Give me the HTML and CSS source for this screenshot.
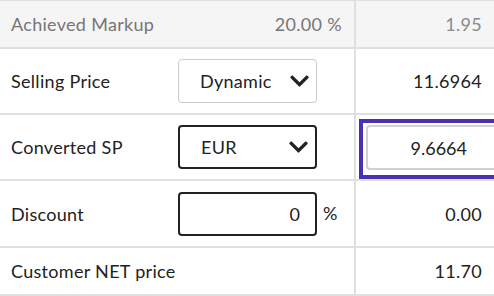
FILE: index.html
```html
<!DOCTYPE html>
<html lang="en">
<head>
    <meta charset="UTF-8">
    <meta name="viewport" content="width=device-width, initial-scale=1.0">
    <title>Price calculation</title>
    <link rel="stylesheet" href="styles.css">
</head>
<body>
    <div class="price-table">
        <div class="row row-muted">
            <div class="cell label">Achieved Markup</div>
            <div class="cell control value">20.00 %</div>
            <div class="cell result">1.95</div>
        </div>

        <div class="row row-tall">
            <div class="cell label">Selling Price</div>
            <div class="cell control">
                <div class="select">
                    <span>Dynamic</span>
                    <svg class="chevron" viewBox="0 120 448 270"><path d="M207 381L13 187c-9-9-9-25 0-34l23-23c9-9 25-9 34 0L224 285l155-155c9-9 25-9 34 0l23 23c9 9 9 25 0 34L241 381c-9 9-25 9-34 0z"/></svg>
                </div>
            </div>
            <div class="cell result">11.6964</div>
        </div>

        <div class="row row-tall">
            <div class="cell label">Converted SP</div>
            <div class="cell control">
                <div class="select select-dark">
                    <span>EUR</span>
                    <svg class="chevron" viewBox="0 120 448 270"><path d="M207 381L13 187c-9-9-9-25 0-34l23-23c9-9 25-9 34 0L224 285l155-155c9-9 25-9 34 0l23 23c9 9 9 25 0 34L241 381c-9 9-25 9-34 0z"/></svg>
                </div>
            </div>
            <div class="cell result result-edit">
                <div class="focus-box">
                    <input type="text" class="sp-input" value="9.6664">
                </div>
            </div>
        </div>

        <div class="row row-tall row-discount">
            <div class="cell label">Discount</div>
            <div class="cell control">
                <input type="text" class="discount-input" value="0">
                <span class="unit">%</span>
            </div>
            <div class="cell result">0.00</div>
        </div>

        <div class="row">
            <div class="cell label">Customer NET price</div>
            <div class="cell control"></div>
            <div class="cell result">11.70</div>
        </div>
    </div>
</body>
</html>
```

FILE: styles.css
```css
body {
    margin: 0;
    font-family: Lato, "Liberation Sans", sans-serif;
    font-size: 18px;
    letter-spacing: 0.3px;
    color: #222;
    background-color: white;
}

.price-table {
    width: 494px;
    border-top: 1px solid #e0e0e0;
}

.row {
    display: grid;
    grid-template-columns: 178px 176px 1fr;
    height: 46px;
    border-bottom: 2px solid #e0e0e0;
}

.row-tall {
    height: 64px;
}

.row-discount {
    height: 65px;
}

.row-muted {
    background-color: #f5f5f5;
    color: #767676;
}

.cell {
    display: flex;
    align-items: center;
}

.label {
    padding-left: 11px;
}

.control {
    padding-right: 12px;
}

.value {
    justify-content: flex-end;
}

.result {
    justify-content: flex-end;
    padding-right: 12px;
    border-left: 2px solid #e0e0e0;
}

.row-muted .result {
    color: #8a8a8a;
}

.select {
    box-sizing: border-box;
    width: 139px;
    height: 44px;
    display: flex;
    align-items: center;
    justify-content: space-between;
    padding: 0 7px 0 21px;
    border: 1.5px solid #c8cccf;
    border-radius: 4px;
}

.select-dark {
    border: 2px solid #222;
}

.chevron {
    width: 19px;
    height: 12px;
    fill: #222;
}

.result-edit {
    align-items: stretch;
    padding: 0;
}

.focus-box {
    flex: 1;
    margin: 4px 8px 0 3px;
    border: 4px solid #4b30b5;
    overflow: hidden;
}

.sp-input {
    box-sizing: border-box;
    display: block;
    width: 140px;
    height: 45px;
    margin: 2px 0 0 3px;
    padding: 0 37px 0 0;
    border: 2px solid #cfd2d4;
    border-radius: 4px;
    font: inherit;
    color: #222;
    text-align: right;
    outline: none;
}

.discount-input {
    box-sizing: border-box;
    width: 139px;
    height: 44px;
    padding: 0 15px 0 0;
    border: 2px solid #222;
    border-radius: 4px;
    font: inherit;
    color: #222;
    text-align: right;
}

.unit {
    margin-left: 6px;
    margin-top: -2px;
}
```
